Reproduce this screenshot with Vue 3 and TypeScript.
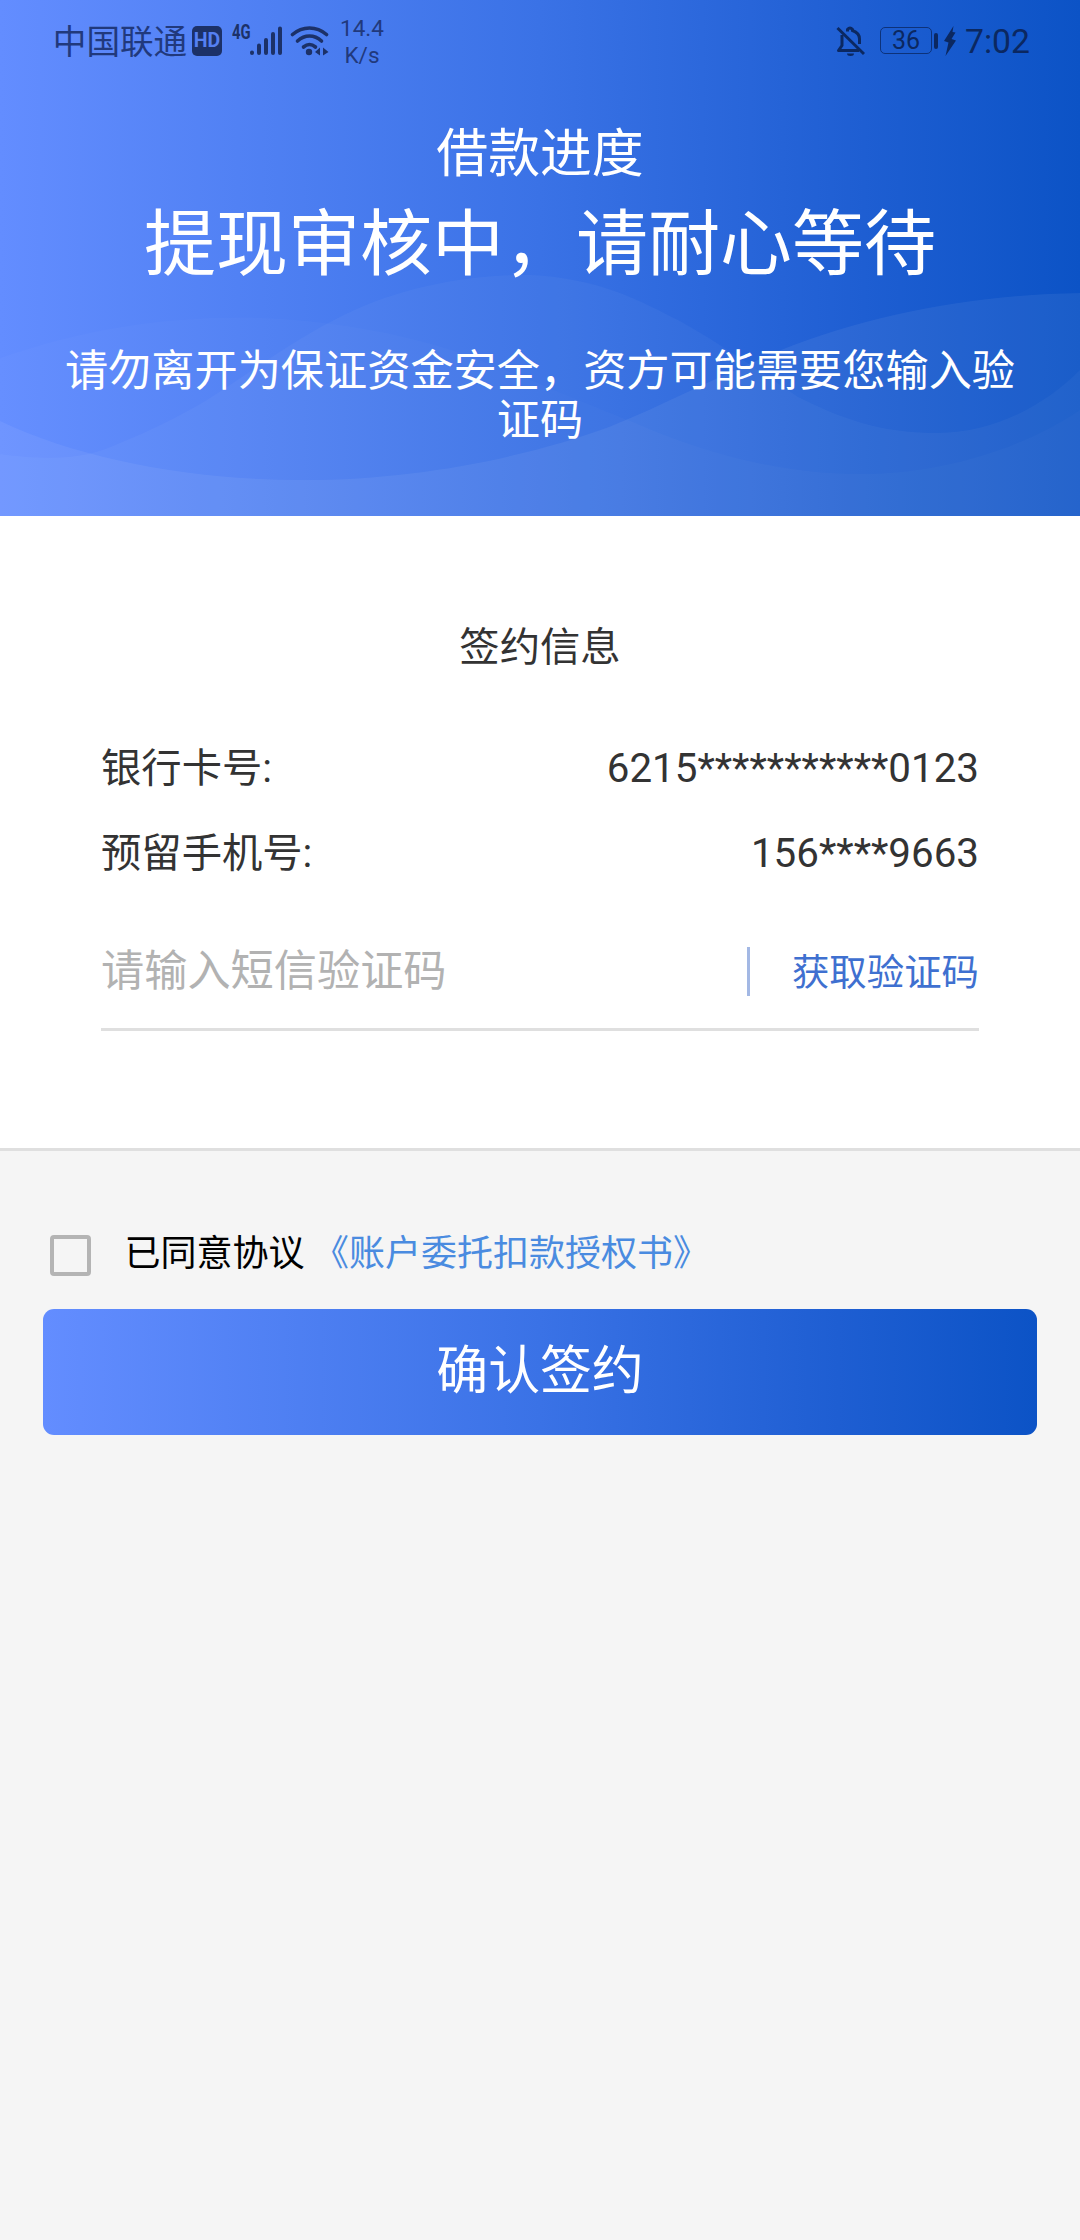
<script setup lang="ts">
import { ref } from 'vue'

interface InfoRow {
  label: string
  value: string
}

const rows: InfoRow[] = [
  { label: '银行卡号:', value: '6215***********0123' },
  { label: '预留手机号:', value: '156****9663' },
]

const code = ref('')
const agreed = ref(false)
</script>

<template>
  <div class="page">
    <header class="header">
      <svg class="waves" viewBox="0 0 1080 516" preserveAspectRatio="none" aria-hidden="true">
        <path fill="#fff" fill-opacity=".02" d="M0 358 C80 330 160 317 245 317.500 C320 318 400 333 451 350 C520 374 560 394 633 422 C700 452 780 474 860 474 C940 474 1020 450 1080 410 V516 H0Z" />
        <path fill="#fff" fill-opacity=".035" d="M0 454 C60 462 90 457 120 443 C150 431 180 416 207 400 C250 372 300 336 344 315 C400 287 470 274 530 275 C600 278 640 301 678 320 C720 343 760 372 798 397 C840 418 880 433 936 433 C1000 433 1050 400 1080 370 V516 H0Z" />
        <path fill="#fff" fill-opacity=".06" d="M0 421 C80 459 190 480 303 480 C420 480 530 456 609 427 C670 402 720 375 781 350 C870 315 970 295 1080 293 V516 H0Z" />
      </svg>

      <div class="status">
        <span class="carrier">中国联通</span>
        <span class="hd">HD</span>
        <span class="net">4G</span>
        <svg class="signal" width="32" height="32" viewBox="0 0 32 32">
          <g stroke="currentColor" stroke-width="4" stroke-linecap="round">
            <path d="M2 27.500V28M9 20.500V28M16 15V28M23 9V28M30 3.500V28" />
          </g>
        </svg>
        <svg class="wifi" width="39" height="32" viewBox="0 0 39 32">
          <g fill="none" stroke="currentColor" stroke-width="3.600" stroke-linecap="round">
            <path d="M2.500 9.500Q10 3 19.500 3T36.500 9.500" />
            <path d="M7.500 16Q13 11 19.500 11T31.500 16" />
            <path d="M13.500 22Q19.500 17 25.500 22" />
          </g>
          <circle cx="19" cy="27" r="3.200" fill="currentColor" />
          <path d="M25 27l5-4.500v8zM38.500 27l-5.500-4.500v8z" fill="currentColor" />
        </svg>
        <span class="speed">14.4<br />K/s</span>

        <span class="spacer"></span>

        <svg class="bell" width="29" height="32" viewBox="0 0 29 32">
          <g fill="none" stroke="currentColor" stroke-width="3">
            <path d="M1.500 3l26.500 26" />
            <path d="M6 10V20.500L2.500 25.500H23" stroke-linejoin="round" />
            <path d="M11.500 6.500V4.500Q14 1.500 16.500 4.500V5.500Q23.500 8 23.500 14V19" />
          </g>
          <path d="M11 28.500h7a3.500 2.500 0 0 1-7 0z" fill="currentColor" />
        </svg>
        <span class="battery">36</span>
        <span class="tip"></span>
        <svg class="bolt" width="14" height="30" viewBox="0 0 14 30">
          <path d="M10.500 0L1 15l4.500 1.500L2.500 30 13 14.500 8.500 13 12.500 6.500 9.500 6z" fill="currentColor" />
        </svg>
        <span class="time">7:02</span>
      </div>

      <h1 class="title">借款进度</h1>
      <p class="state">提现审核中，请耐心等待</p>
      <p class="hint">请勿离开为保证资金安全，资方可能需要您输入验证码</p>
    </header>

    <section class="card">
      <h2 class="card-title">签约信息</h2>
      <div v-for="row in rows" :key="row.label" class="row">
        <span>{{ row.label }}</span>
        <span>{{ row.value }}</span>
      </div>
      <div class="sms">
        <input v-model="code" class="sms-input" type="text" placeholder="请输入短信验证码" />
        <span class="bar"></span>
        <button class="get" type="button">获取验证码</button>
      </div>
    </section>

    <label class="agree">
      <input v-model="agreed" class="box" type="checkbox" />
      <span>已同意协议</span>
      <a class="link">《账户委托扣款授权书》</a>
    </label>
    <button class="submit" type="button">确认签约</button>
  </div>
</template>

<style>
body {
  margin: 0;
  background: #f5f5f5;
}
</style>

<style scoped>
.page {
  width: 1080px;
  min-height: 2240px;
  background: #f5f5f5;
  color: #333;
  font-family: Roboto, 'Noto Sans CJK SC', sans-serif;
}
h1,
h2,
p {
  margin: 0;
  font-weight: 400;
}
button,
input {
  margin: 0;
  padding: 0;
  border: 0;
  outline: 0;
  background: none;
  font-family: inherit;
}
.header {
  position: relative;
  box-sizing: border-box;
  height: 516px;
  color: #fff;
  text-align: center;
  background: linear-gradient(90deg, #638dff 0%, #3a72e6 50%, #1e5ed2 80%, #0c53c6 100%);
}
.waves {
  position: absolute;
  inset: 0;
  width: 100%;
  height: 100%;
}
.status {
  position: relative;
  display: flex;
  align-items: center;
  box-sizing: border-box;
  height: 84px;
  padding: 0 50px 0 52px;
  color: #1c3168;
}
.carrier {
  width: 136px;
  margin-top: 2px;
  font-size: 33.600px;
  line-height: 40px;
  color: #21397c;
  white-space: nowrap;
}
.hd {
  width: 30px;
  height: 30px;
  margin: -2px 0 0 4px;
  border-radius: 5px;
  background: #1c3168;
  color: #5580f2;
  font-size: 19.500px;
  font-weight: 700;
  line-height: 30px;
}
.net {
  width: 18px;
  margin: -19px 0 0 10px;
  font-size: 19.500px;
  font-weight: 700;
  line-height: 20px;
  transform: scaleX(.76);
  transform-origin: left;
}
.signal {
  margin: -3px 0 0;
}
.wifi {
  margin: -3px 0 0 8px;
}
.speed {
  width: 44px;
  margin-left: 11px;
  font-size: 22.500px;
  line-height: 27px;
  color: #21397c;
}
.spacer {
  flex: 1;
}
.bell,
.battery,
.tip,
.bolt,
.time {
  color: #0b2861;
}
.bell {
  margin-right: 15px;
  margin-top: -3px;
}
.battery {
  box-sizing: border-box;
  width: 52px;
  height: 27px;
  margin-top: -3px;
  border: 1.500px solid #0d327a;
  border-radius: 5px;
  font-size: 25px;
  line-height: 26px;
}
.tip {
  width: 4px;
  height: 16px;
  margin: -3px 0 0 2px;
  border-radius: 2px;
  background: #0b2861;
}
.bolt {
  margin: -3px 0 0 5px;
}
.time {
  width: 65px;
  margin: -1px 0 0 8px;
  font-size: 33.700px;
  line-height: 40px;
}
.title {
  position: relative;
  margin-top: 41px;
  font-size: 51.840px;
  line-height: 60px;
}
.state {
  position: relative;
  margin-top: 20px;
  font-size: 72px;
  line-height: 80px;
}
.hint {
  position: relative;
  margin-top: 63px;
  padding: 0 64px;
  font-size: 43.200px;
  line-height: 48.600px;
}
.card {
  box-sizing: border-box;
  height: 635px;
  padding: 102px 101px 0;
  background: #fff;
  border-bottom: 3px solid #dfdfdf;
  font-size: 40.320px;
}
.card-title {
  margin-bottom: 61px;
  font-size: inherit;
  line-height: 60px;
  text-align: center;
}
.row {
  display: flex;
  justify-content: space-between;
  height: 60px;
  margin-bottom: 25px;
  line-height: 60px;
}
.sms {
  display: flex;
  align-items: center;
  box-sizing: border-box;
  height: 122px;
  padding-top: 6px;
  border-bottom: 3px solid #dfdfdf;
}
.sms-input {
  width: 646px;
  height: 60px;
  color: #333;
  font-size: 43.200px;
}
.sms-input::placeholder {
  color: #b2b2b2;
  opacity: 1;
}
.bar {
  width: 3px;
  height: 49px;
  background: #a3b8e4;
}
.get {
  flex: 1;
  margin-top: 2px;
  color: #3f70d0;
  font-size: 37.440px;
  line-height: 50px;
  text-align: right;
}
.agree {
  display: flex;
  align-items: center;
  height: 50px;
  margin: 78px 0 30px 50px;
  color: #000;
  font-size: 36px;
  line-height: 50px;
}
.box {
  appearance: none;
  box-sizing: border-box;
  width: 41px;
  height: 41px;
  margin: 3px 33.500px 0 0;
  border: 4px solid #b4b4b4;
  border-radius: 4px;
}
.link {
  margin-left: 8.500px;
  color: #4a8be0;
}
.submit {
  display: block;
  width: 994px;
  height: 126px;
  margin: 0 43px;
  border-radius: 11px;
  background: linear-gradient(90deg, #638dff 0%, #3a72e6 50%, #1e5ed2 80%, #0c53c6 100%);
  color: #fff;
  font-size: 51.840px;
  line-height: 126px;
}
</style>
